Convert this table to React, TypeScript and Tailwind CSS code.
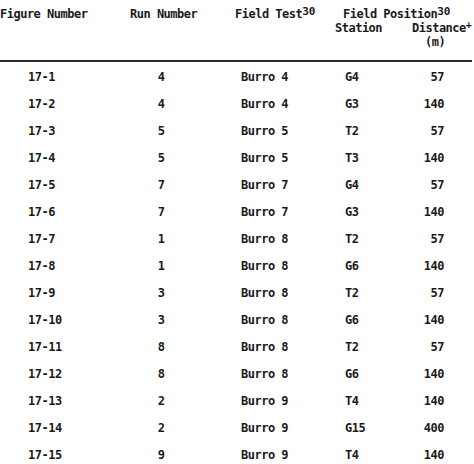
const rows: [string, string, string, string, string][] = [
  ["17-1", "4", "Burro 4", "G4", "57"],
  ["17-2", "4", "Burro 4", "G3", "140"],
  ["17-3", "5", "Burro 5", "T2", "57"],
  ["17-4", "5", "Burro 5", "T3", "140"],
  ["17-5", "7", "Burro 7", "G4", "57"],
  ["17-6", "7", "Burro 7", "G3", "140"],
  ["17-7", "1", "Burro 8", "T2", "57"],
  ["17-8", "1", "Burro 8", "G6", "140"],
  ["17-9", "3", "Burro 8", "T2", "57"],
  ["17-10", "3", "Burro 8", "G6", "140"],
  ["17-11", "8", "Burro 8", "T2", "57"],
  ["17-12", "8", "Burro 8", "G6", "140"],
  ["17-13", "2", "Burro 9", "T4", "140"],
  ["17-14", "2", "Burro 9", "G15", "400"],
  ["17-15", "9", "Burro 9", "T4", "140"],
];

export default function App() {
  return (
    <div className="w-[474px] h-[464px] bg-white text-[#1a1a1a] font-bold text-[12px] tracking-[-0.5px] leading-[14px] font-['DejaVu_Sans_Mono',monospace] overflow-hidden">
      {/* header */}
      <div className="h-[60px] pt-[7px] flex flex-col">
        <div className="flex whitespace-nowrap">
          <div className="w-[130px]">Figure Number</div>
          <div className="w-[105px]">Run Number</div>
          <div className="w-[108px]">
            Field Test<sup className="text-[11px] tracking-normal relative -top-[3px]">30</sup>
          </div>
          <div>
            Field Position<sup className="text-[11px] tracking-normal relative -top-[3px]">30</sup>
          </div>
        </div>
        <div className="flex whitespace-nowrap">
          <div className="w-[335px]" />
          <div className="w-[77px]">Station</div>
          <div>
            Distance<sup className="text-[10px] tracking-normal relative -top-[4px]">+</sup>
          </div>
        </div>
        <div className="flex whitespace-nowrap">
          <div className="w-[425px]" />
          <div>(m)</div>
        </div>
      </div>
      <div className="h-[2px] w-[472px] bg-[#2a2a2a]" />
      {/* body */}
      <div className="flex flex-col pt-[1px]">
        {rows.map((r) => (
          <div key={r[0]} className="flex h-[27px] items-center whitespace-nowrap">
            <div className="w-[130px] pl-[28px]">{r[0]}</div>
            <div className="w-[62px] text-center">{r[1]}</div>
            <div className="w-[153px] pl-[49px]">{r[2]}</div>
            <div className="w-[60px]">{r[3]}</div>
            <div className="w-[39px] text-right">{r[4]}</div>
          </div>
        ))}
      </div>
    </div>
  );
}
